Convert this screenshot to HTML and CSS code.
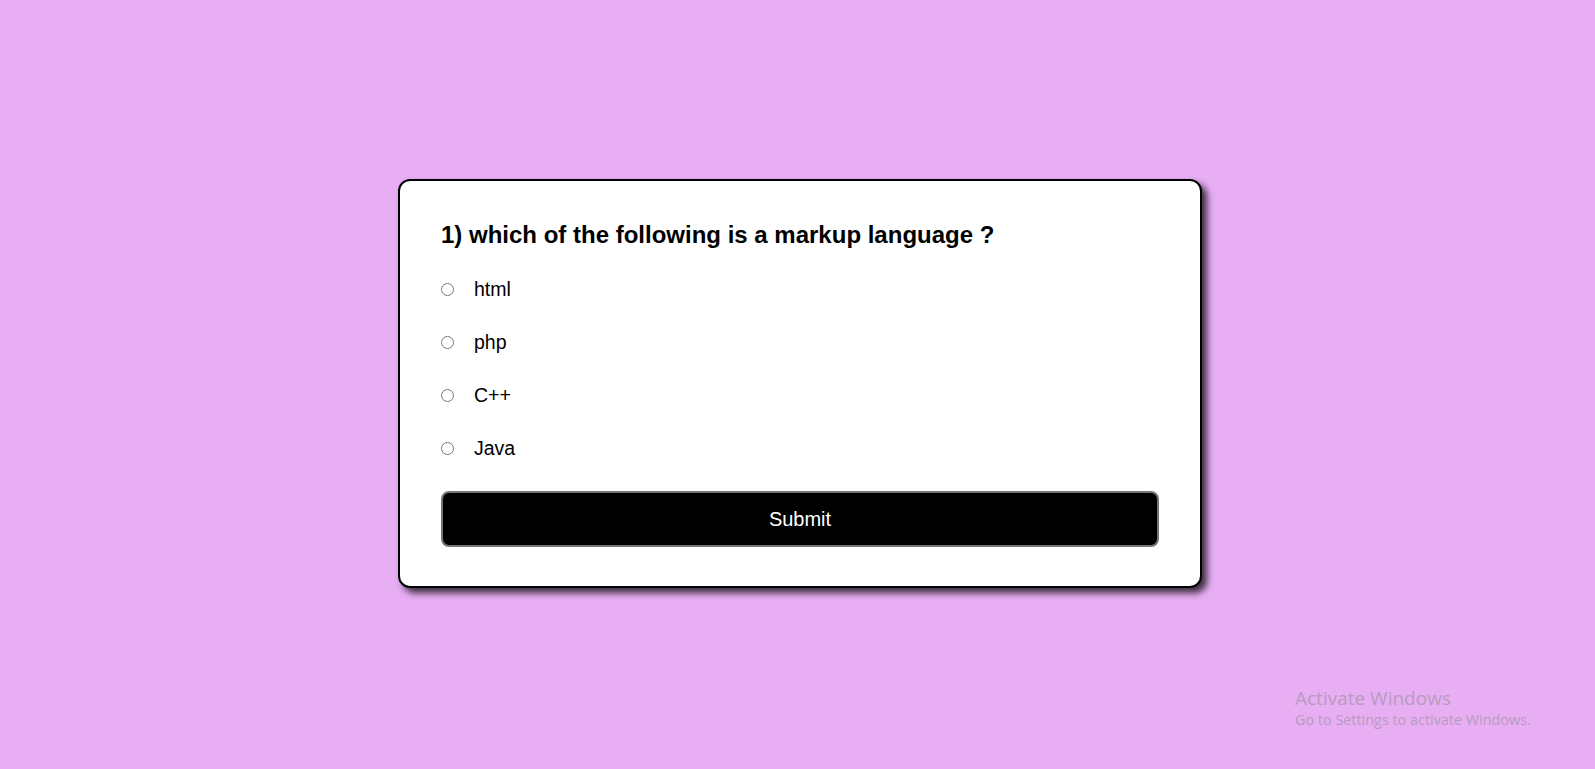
FILE: index.html
```html
<!DOCTYPE html>
<html>
<head>
<meta charset="utf-8">
<link rel="stylesheet" href="styles.css">
</head>
<body>
<main class="page">
  <div class="card">
    <h2 class="question">1) which of the following is a markup language ?</h2>
    <ul class="options">
      <li class="option"><input type="radio" name="q" id="a"><label for="a">html</label></li>
      <li class="option"><input type="radio" name="q" id="b"><label for="b">php</label></li>
      <li class="option"><input type="radio" name="q" id="c"><label for="c">C++</label></li>
      <li class="option"><input type="radio" name="q" id="d"><label for="d">Java</label></li>
    </ul>
    <button class="submit">Submit</button>
  </div>
</main>
<div class="watermark">
  <div class="wm-title">Activate Windows</div>
  <div class="wm-sub">Go to Settings to activate Windows.</div>
</div>
</body>
</html>
```
FILE: styles.css
```css
* { box-sizing: border-box; }
html, body { margin: 0; padding: 0; }
body {
  background: #e8aef4;
  font-family: "Liberation Sans", Arial, sans-serif;
  height: 769px;
  overflow: hidden;
}
.page {
  height: 100%;
  display: flex;
  align-items: center;
  justify-content: center;
  padding: 0 0 2px 5px;
}
.card {
  width: 804px;
  background: #fff;
  border: 2px solid #000;
  border-radius: 12px;
  box-shadow: 5px 5px 7px rgba(0,0,0,0.75);
  padding: 40px 41px 39px;
}
.question {
  margin: 0 0 14px;
  font-size: 24px;
  font-weight: bold;
  line-height: 28px;
  color: #000;
}
.options {
  list-style: none;
  margin: 0;
  padding: 0;
}
.option {
  display: flex;
  align-items: center;
  height: 53px;
  font-size: 19.5px;
}
.option input {
  margin: 0 20px 0 0;
  width: 13px;
  height: 13px;
}
.submit {
  display: block;
  width: 100%;
  height: 56px;
  margin-top: 16px;
  background: #000;
  color: #fff;
  border: 2px solid #767676;
  border-radius: 8px;
  font-family: "Liberation Sans", Arial, sans-serif;
  font-size: 20px;
}
.watermark {
  position: absolute;
  left: 1295px;
  top: 686px;
  color: #b79bbd;
  font-family: "Open Sans", "Noto Sans", sans-serif;
}
.wm-title { font-size: 19px; line-height: 24px; }
.wm-sub { font-size: 14.4px; line-height: 20px; }
```
